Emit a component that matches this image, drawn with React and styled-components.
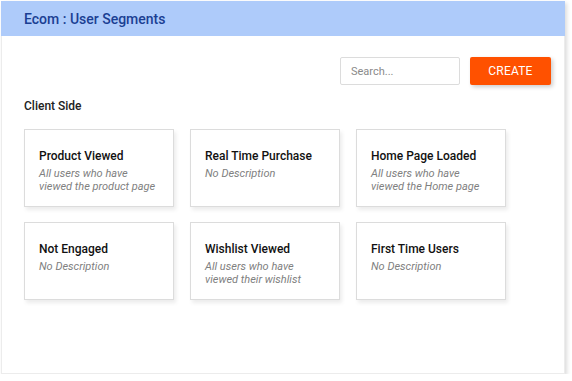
import React from "react";
import styled, { createGlobalStyle } from "styled-components";

const Global = createGlobalStyle`
  html, body { margin: 0; padding: 0; background: #fff; }
  body { font-family: Roboto, "Noto Sans", Arial, sans-serif; }
  * { box-sizing: border-box; }
`;

const Frame = styled.div`
  margin: 1px 0 0 1px;
  width: 564px;
  height: 373px;
  background: #fff;
  border: 1px solid #ececec;
  box-shadow: 2px 2px 4px rgba(0, 0, 0, 0.14);
  display: flex;
  flex-direction: column;
`;

const Header = styled.div`
  height: 35px;
  background: #aecbfa;
  display: flex;
  align-items: center;
  padding-left: 23px;
  margin: -1px -1px 0 -1px;
`;

const Title = styled.h1`
  margin: 0;
  font-size: 14px;
  font-weight: 500;
  color: #1b3f93;
`;

const Body = styled.div`
  padding: 21px 13px 0 22px;
  display: flex;
  flex-direction: column;
`;

const Toolbar = styled.div`
  display: flex;
  justify-content: flex-end;
  gap: 10px;
`;

const Search = styled.input`
  width: 120px;
  height: 28px;
  border: 1px solid #dcdcdc;
  border-radius: 2px;
  padding: 0 10px;
  font-family: Roboto, Arial, sans-serif;
  font-size: 11px;
  color: #333;
  outline: none;
  &::placeholder { color: #8a8a8a; }
`;

const Button = styled.button`
  width: 81px;
  height: 28px;
  border: none;
  border-radius: 2px;
  background: #ff5100;
  color: #fff;
  font-family: Roboto, Arial, sans-serif;
  font-size: 12px;
  letter-spacing: 0.2px;
  box-shadow: 2px 2px 4px rgba(0, 0, 0, 0.2);
`;

const Section = styled.h2`
  margin: 14px 0 0 0;
  font-size: 12px;
  font-weight: 500;
  color: #222;
  line-height: 14px;
`;

const Grid = styled.div`
  margin-top: 16px;
  display: grid;
  grid-template-columns: repeat(3, 150px);
  grid-auto-rows: 78px;
  column-gap: 16px;
  row-gap: 15px;
`;

const Card = styled.div`
  border: 1px solid #dcdcdc;
  background: #fff;
  box-shadow: 2px 3px 4px rgba(0, 0, 0, 0.08);
  padding: 19px 10px 0 14px;
`;

const CardTitle = styled.div`
  font-size: 12px;
  font-weight: 500;
  color: #111;
  line-height: 15px;
`;

const CardDesc = styled.div`
  margin-top: 3px;
  font-size: 11px;
  font-style: italic;
  color: #808080;
  line-height: 13px;
`;

const segments = [
  { t: "Product Viewed", d: "All users who have viewed the product page" },
  { t: "Real Time Purchase", d: "No Description" },
  { t: "Home Page Loaded", d: "All users who have viewed the Home page" },
  { t: "Not Engaged", d: "No Description" },
  { t: "Wishlist Viewed", d: "All users who have viewed their wishlist" },
  { t: "First Time Users", d: "No Description" },
];

export default function App() {
  return (
    <>
      <Global />
      <Frame>
        <Header>
          <Title>Ecom : User Segments</Title>
        </Header>
        <Body>
          <Toolbar>
            <Search placeholder="Search..." />
            <Button>CREATE</Button>
          </Toolbar>
          <Section>Client Side</Section>
          <Grid>
            {segments.map((s) => (
              <Card key={s.t}>
                <CardTitle>{s.t}</CardTitle>
                <CardDesc>{s.d}</CardDesc>
              </Card>
            ))}
          </Grid>
        </Body>
      </Frame>
    </>
  );
}
